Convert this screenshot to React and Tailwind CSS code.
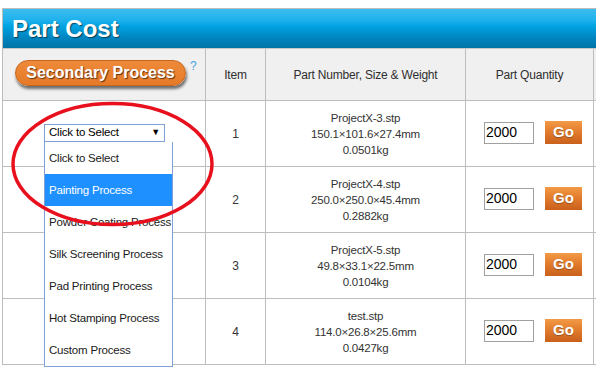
import React from 'react';

const rows = [
  { item: 1, name: 'ProjectX-3.stp', size: '150.1×101.6×27.4mm', weight: '0.0501kg' },
  { item: 2, name: 'ProjectX-4.stp', size: '250.0×250.0×45.4mm', weight: '0.2882kg' },
  { item: 3, name: 'ProjectX-5.stp', size: '49.8×33.1×22.5mm', weight: '0.0104kg' },
  { item: 4, name: 'test.stp', size: '114.0×26.8×25.6mm', weight: '0.0427kg' },
];

const options = [
  'Click to Select',
  'Painting Process',
  'Powder Coating Process',
  'Silk Screening Process',
  'Pad Printing Process',
  'Hot Stamping Process',
  'Custom Process',
];

function Cell({ className = '', children }) {
  return (
    <div className={`border-r border-b border-[#bdbdbd] flex items-center ${className}`}>
      {children}
    </div>
  );
}

export default function App() {
  return (
    <div
      className="relative w-[596px] h-[378px] overflow-hidden bg-white pt-2 text-[12px] text-[#333]"
      style={{ fontFamily: '"Liberation Sans", Arial, sans-serif' }}
    >
      <div className="ml-[2px] border-l border-t border-[#bdbdbd]">
        {/* title bar */}
        <div className="h-[40px] flex items-center pl-[9px] border-b border-[#c8c8c8] bg-[linear-gradient(to_bottom,#3dbdee_0%,#1cb0ec_30%,#00a2e2_45%,#0089c4_70%,#0073a6_100%)]">
          <h1 className="text-[24px] font-bold text-white leading-none [text-shadow:1px_1px_1px_rgba(0,0,0,0.55)]">
            Part Cost
          </h1>
        </div>

        <div className="grid grid-cols-[203px_60px_200px_128px_1fr]">
          {/* header row */}
          <Cell className="h-[52px] bg-[#f0f0f0] pl-[12px]">
            <div className="flex items-start -mt-[3px]">
              <div className="w-[171px] h-[26px] rounded-full bg-[linear-gradient(to_bottom,#ee8a3a,#e57a28)] border border-[#c8651c] shadow-[1px_3px_3px_rgba(0,0,0,0.55)] flex items-center justify-center">
                <span className="text-[16px] font-bold text-white [text-shadow:1px_1px_1px_rgba(0,0,0,0.6)]">
                  Secondary Process
                </span>
              </div>
              <span className="ml-[4px] -mt-[3px] text-[12px] text-[#4aa3dc]">?</span>
            </div>
          </Cell>
          <Cell className="h-[52px] bg-[#f0f0f0] justify-center tracking-[-0.2px] text-[#2e2e2e]">Item</Cell>
          <Cell className="h-[52px] bg-[#f0f0f0] justify-center tracking-[-0.2px] text-[#2e2e2e]">
            Part Number, Size &amp; Weight
          </Cell>
          <Cell className="h-[52px] bg-[#f0f0f0] justify-center tracking-[-0.2px] text-[#2e2e2e]">Part Quantity</Cell>
          <div className="h-[52px] border-b border-[#bdbdbd] bg-[#f0f0f0]" />

          {rows.map((r) => (
            <React.Fragment key={r.item}>
              <Cell className="h-[66px]" />
              <Cell className="h-[66px] justify-center">{r.item}</Cell>
              <Cell className="h-[66px] justify-center flex-col leading-[16px] text-[11.5px] tracking-[-0.2px]">
                <span>{r.name}</span>
                <span>{r.size}</span>
                <span>{r.weight}</span>
              </Cell>
              <Cell className="h-[66px] pl-[18px] gap-[11px]">
                <div className="w-[50px] h-[22px] border border-[#a0a0a0] text-[14px] text-black flex items-center pl-[1px] -mt-[2px]">
                  2000
                </div>
                <div className="w-[37px] h-[23px] bg-[linear-gradient(to_bottom,#f39a45,#e07a2c_50%,#c9601c)] flex items-center justify-center text-white font-bold text-[15px] -mt-[2px] [text-shadow:0_1px_1px_rgba(0,0,0,0.3)]">
                  Go
                </div>
              </Cell>
              <div className="h-[66px] border-b border-[#bdbdbd]" />
            </React.Fragment>
          ))}
        </div>
      </div>

      {/* open select */}
      <div className="absolute left-[44px] top-[124px] w-[121px] h-[18px] border border-[#7f9fd6] bg-white flex items-center justify-between pl-[4px] pr-[4px] text-[11.5px] tracking-[-0.2px] text-black">
        <span>Click to Select</span>
        <span className="text-[9px]">▼</span>
      </div>
      <div className="absolute left-[44px] top-[142px] w-[129px] border border-[#7f9fd6] border-t-0 bg-white">
        {options.map((o, i) => (
          <div
            key={o}
            className={`h-[32px] flex items-center pl-[4px] pt-[2px] text-[11.5px] tracking-[-0.2px] whitespace-nowrap ${
              i === 1 ? 'bg-[#1e90ff] text-white' : 'text-[#1a1a1a]'
            }`}
          >
            {o}
          </div>
        ))}
      </div>

      {/* annotation ellipse */}
      <svg className="absolute left-0 top-0 pointer-events-none" width="596" height="378">
        <ellipse cx="112.5" cy="164" rx="99.5" ry="60.5" fill="none" stroke="#e8101c" strokeWidth="3.5" />
      </svg>
    </div>
  );
}
